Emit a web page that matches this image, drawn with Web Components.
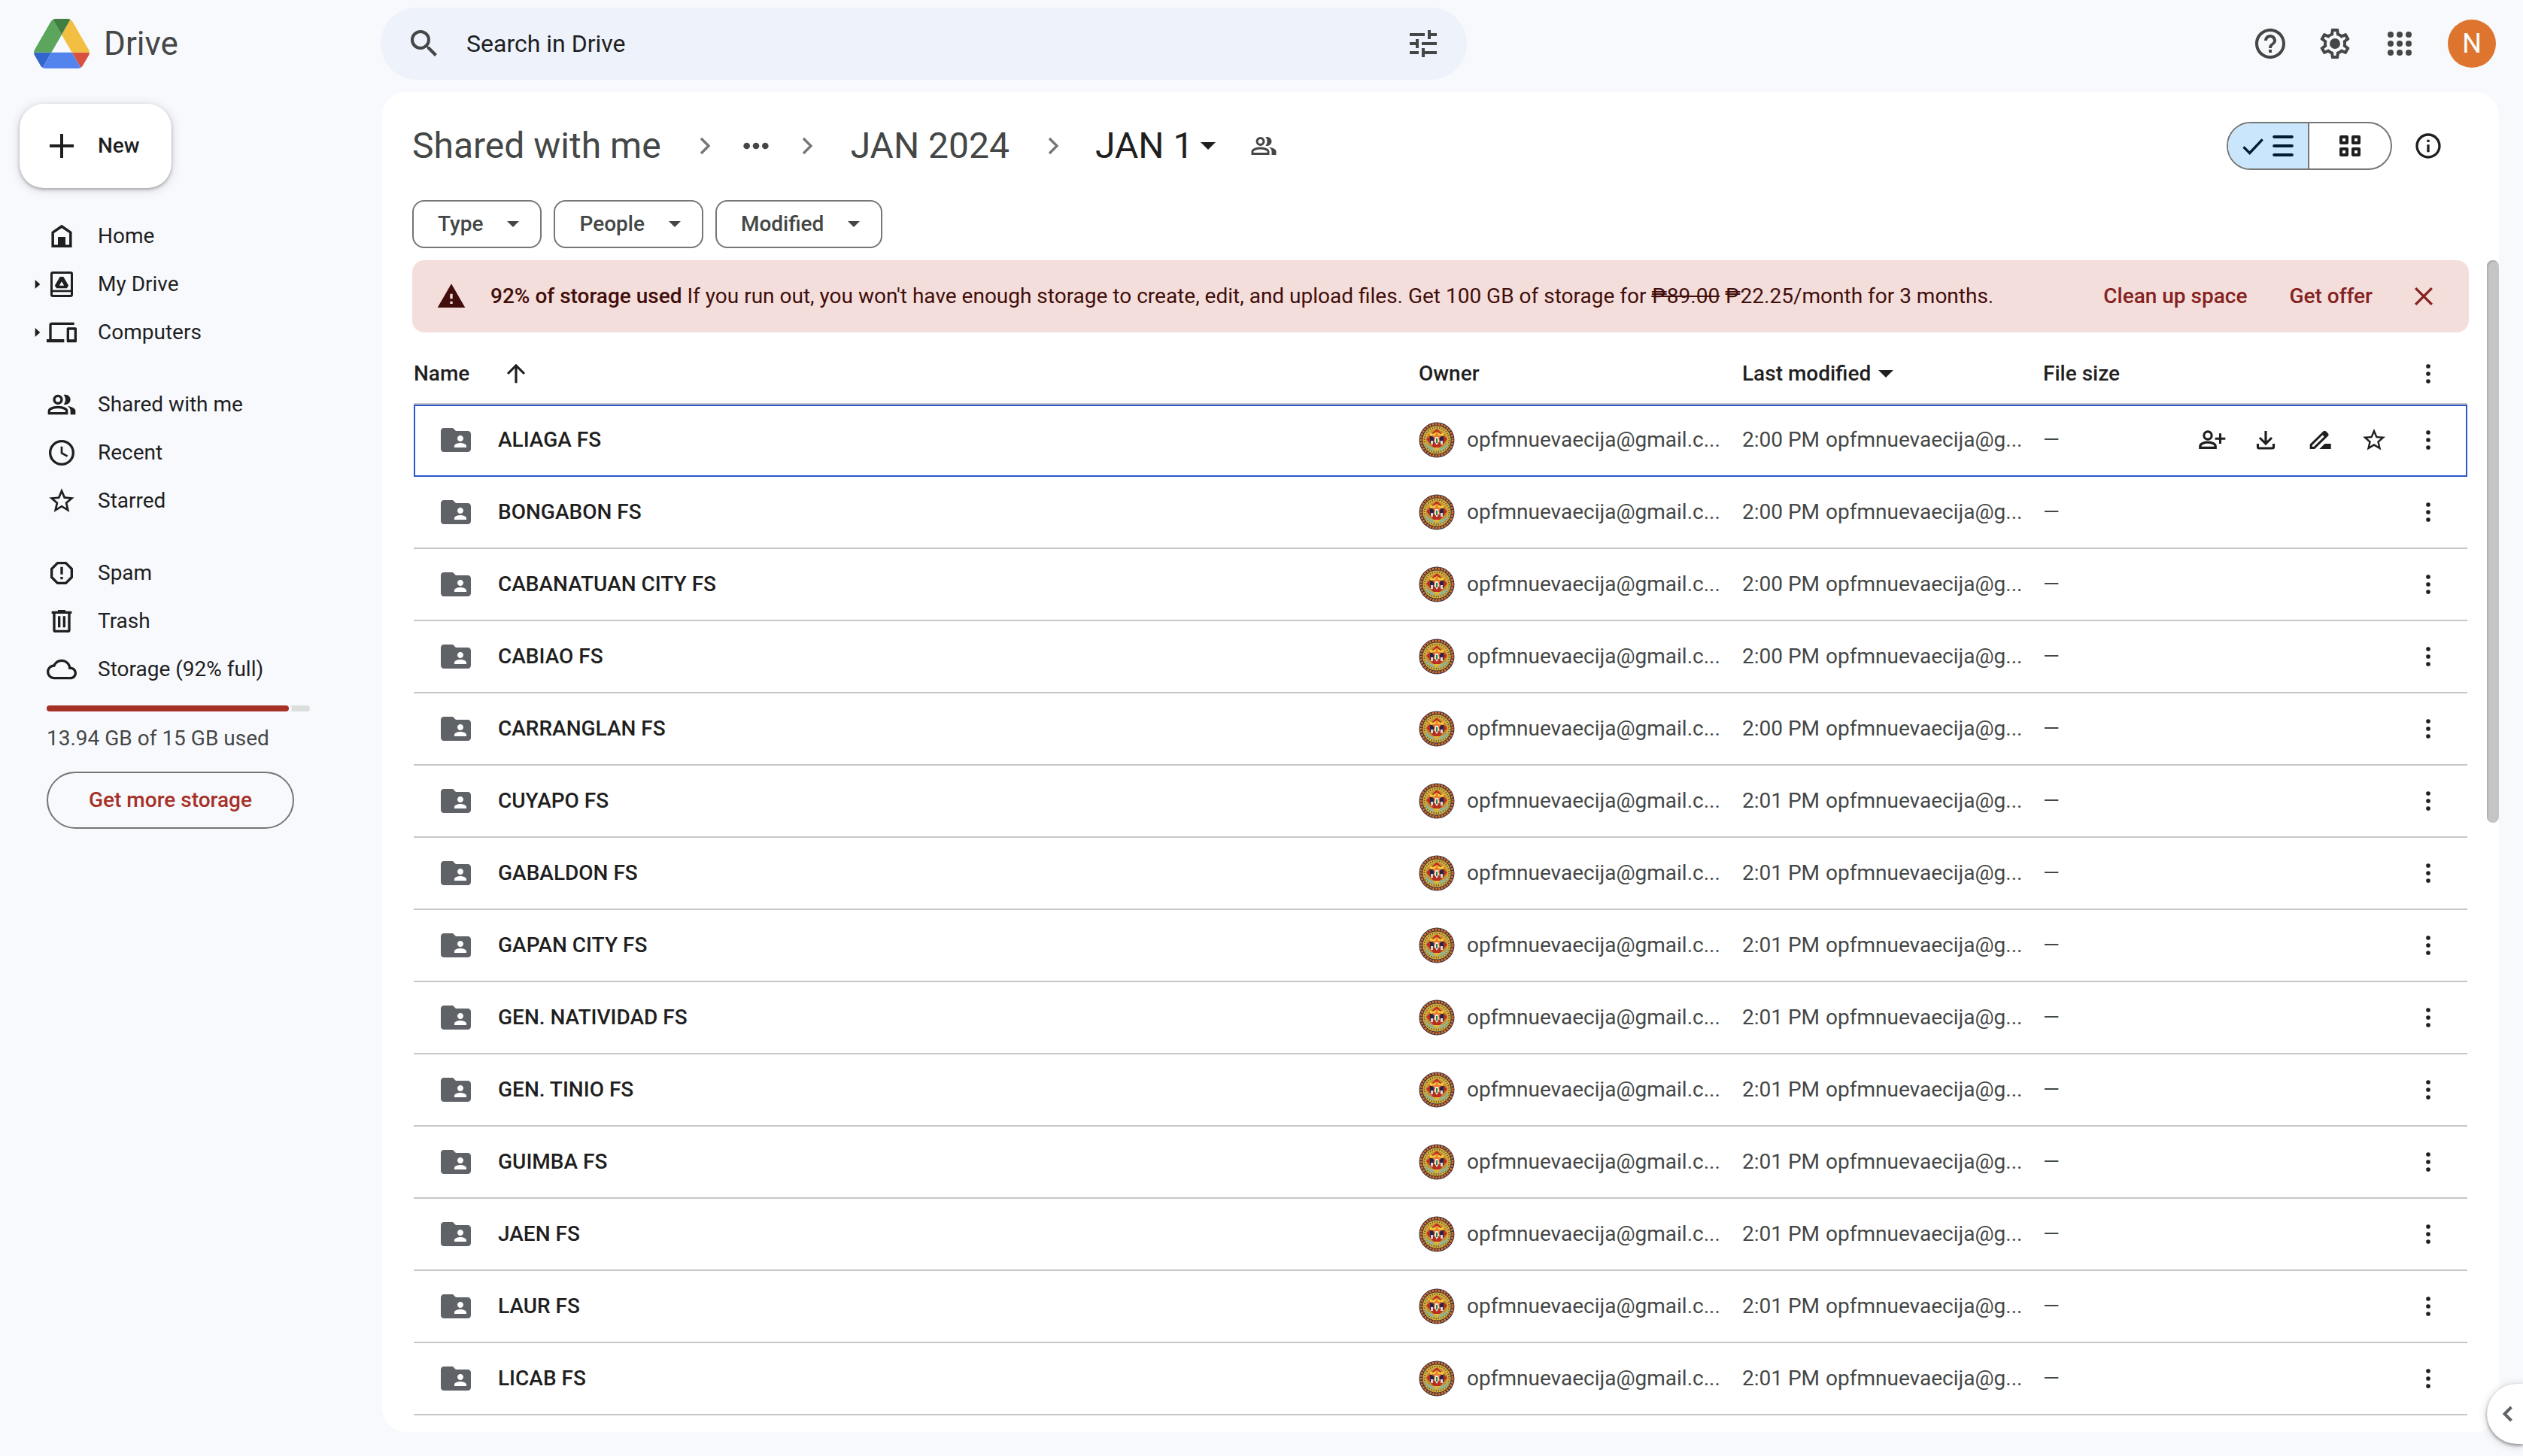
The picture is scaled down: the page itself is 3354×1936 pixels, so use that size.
<!DOCTYPE html>
<html lang="en">
<head>
<meta charset="utf-8">
<title>JAN 1 - Google Drive</title>
<style>
    body {
        margin: 0;
        background: #f8f9fd;
        color: #1f1f1f;
        font-family: Roboto, "Liberation Sans", sans-serif;
        font-size: 28px;
        line-height: 40px;
    }
</style>
</head>
<body>
<drive-app></drive-app>

<script>
// ---------- icons ----------

const icons = {
    search: '<path d="M15.5 14h-.79l-.28-.27A6.47 6.47 0 0 0 16 9.5 6.5 6.5 0 1 0 9.5 16c1.61 0 3.09-.59 4.23-1.57l.27.28v.79l5 4.99L20.49 19l-4.99-5zm-6 0a4.5 4.5 0 1 1 0-9 4.5 4.5 0 0 1 0 9z"/>',
    tune: '<path d="M3 17v2h6v-2H3zM3 5v2h10V5H3zm10 16v-2h8v-2h-8v-2h-2v6h2zM7 9v2H3v2h4v2h2V9H7zm14 4v-2H11v2h10zm-6-4h2V7h4V5h-4V3h-2v6z"/>',
    help: '<path d="M11 18h2v-2h-2v2zm1-16C6.48 2 2 6.48 2 12s4.48 10 10 10 10-4.48 10-10S17.52 2 12 2zm0 18c-4.41 0-8-3.59-8-8s3.59-8 8-8 8 3.59 8 8-3.59 8-8 8zm0-14c-2.21 0-4 1.79-4 4h2c0-1.1.9-2 2-2s2 .9 2 2c0 2-3 1.75-3 5h2c0-2.25 3-2.5 3-5 0-2.21-1.79-4-4-4z"/>',
    settings: '<path fill-rule="evenodd" d="M19.43 12.98c.04-.32.07-.64.07-.98s-.03-.66-.07-.98l2.11-1.65c.19-.15.24-.42.12-.64l-2-3.46c-.12-.22-.39-.3-.61-.22l-2.49 1c-.52-.4-1.08-.73-1.69-.98l-.38-2.65C14.46 2.18 14.25 2 14 2h-4c-.25 0-.46.18-.49.42l-.38 2.65c-.61.25-1.17.59-1.69.98l-2.49-1c-.23-.09-.49 0-.61.22l-2 3.46c-.13.22-.07.49.12.64l2.11 1.65c-.04.32-.07.65-.07.98s.03.66.07.98l-2.11 1.65c-.19.15-.24.42-.12.64l2 3.46c.12.22.39.3.61.22l2.49-1c.52.4 1.08.73 1.69.98l.38 2.65c.03.24.24.42.49.42h4c.25 0 .46-.18.49-.42l.38-2.65c.61-.25 1.17-.59 1.69-.98l2.49 1c.23.09.49 0 .61-.22l2-3.46c.12-.22.07-.49-.12-.64l-2.11-1.65zm-1.98-1.71c.04.31.05.52.05.73 0 .21-.02.43-.05.73l-.14 1.13.89.7 1.08.84-.7 1.21-1.27-.51-1.04-.42-.9.68c-.43.32-.84.56-1.25.73l-1.06.43-.16 1.13-.2 1.35h-1.4l-.19-1.35-.16-1.13-1.06-.43c-.43-.18-.83-.41-1.23-.71l-.91-.7-1.06.43-1.27.51-.7-1.21 1.08-.84.89-.7-.14-1.13c-.03-.31-.05-.54-.05-.74s.02-.43.05-.73l.14-1.13-.89-.7-1.08-.84.7-1.21 1.27.51 1.04.42.9-.68c.43-.32.84-.56 1.25-.73l1.06-.43.16-1.13.2-1.35h1.39l.19 1.35.16 1.13 1.06.43c.43.18.83.41 1.23.71l.91.7 1.06-.43 1.27-.51.7 1.21-1.07.85-.89.7.14 1.13z"/><circle cx="12" cy="12" r="3.5"/>',
    apps: '<circle cx="6" cy="6" r="2"/><circle cx="12" cy="6" r="2"/><circle cx="18" cy="6" r="2"/><circle cx="6" cy="12" r="2"/><circle cx="12" cy="12" r="2"/><circle cx="18" cy="12" r="2"/><circle cx="6" cy="18" r="2"/><circle cx="12" cy="18" r="2"/><circle cx="18" cy="18" r="2"/>',
    plus: '<path d="M11 4h2v7h7v2h-7v7h-2v-7H4v-2h7z"/>',
    home: '<path d="M4.9 19.9V9.1L12 4.2l7.1 4.9v10.8z" fill="none" stroke="currentColor" stroke-width="2.1"/><path d="M9 12.6h6V20H9z"/>',
    drive: '<rect x="3.9" y="2.7" width="16.2" height="18.6" rx="1" fill="none" stroke="currentColor" stroke-width="1.8"/><path d="M4 16.6h16v1.6H4z"/><path fill-rule="evenodd" d="M10.6 6h2.8l4.1 7-1.4 2.2H7.9L6.5 13zM12 9.7l-1.9 3.3h3.8z"/>',
    devices: '<path d="M4 6h18V4H4c-1.1 0-2 .9-2 2v11.4H0V20h14v-2.6H4V6zm19 2h-6c-.55 0-1 .45-1 1v10c0 .55.45 1 1 1h6c.55 0 1-.45 1-1V9c0-.55-.45-1-1-1zm-1 9.6h-4V10h4v7.6z"/>',
    group: '<path d="M1 20v-2.8q0-.85.437-1.562.438-.713 1.163-1.088 1.55-.775 3.15-1.163Q7.35 13 9 13t3.25.387q1.6.388 3.15 1.163.725.375 1.163 1.088Q17 16.35 17 17.2V20Zm18 0v-3q0-1.1-.612-2.113-.613-1.012-1.738-1.737 1.275.15 2.4.512 1.125.363 2.1.888.9.5 1.375 1.112Q23 16.275 23 17v3ZM9 12q-1.65 0-2.825-1.175Q5 9.65 5 8q0-1.65 1.175-2.825Q7.35 4 9 4q1.65 0 2.825 1.175Q13 6.35 13 8q0 1.65-1.175 2.825Q10.65 12 9 12Zm10-4q0 1.65-1.175 2.825Q16.65 12 15 12q-.275 0-.7-.062-.425-.063-.7-.138.675-.8 1.037-1.775Q15 9.05 15 8q0-1.05-.363-2.025Q14.275 5 13.6 4.2q.35-.125.7-.163Q14.65 4 15 4q1.65 0 2.825 1.175Q19 6.35 19 8ZM3 18h12v-.8q0-.275-.137-.5-.138-.225-.363-.35-1.35-.675-2.725-1.013Q10.4 15 9 15t-2.775.337Q4.85 15.675 3.5 16.35q-.225.125-.362.35-.138.225-.138.5Zm6-8q.825 0 1.413-.588Q11 8.825 11 8t-.587-1.412Q9.825 6 9 6q-.825 0-1.412.588Q7 7.175 7 8t.588 1.412Q8.175 10 9 10Z"/>',
    clock: '<circle cx="12" cy="12" r="9.2" fill="none" stroke="currentColor" stroke-width="2"/><path d="M12 7v5.3l4.6 2.5" fill="none" stroke="currentColor" stroke-width="1.6"/>',
    star: '<path d="M22 9.24l-7.19-.62L12 2 9.19 8.63 2 9.24l5.46 4.73L5.82 21 12 17.27 18.18 21l-1.63-7.03L22 9.24zM12 15.4l-3.76 2.27 1-4.28-3.32-2.88 4.38-.38L12 6.1l1.71 4.04 4.38.38-3.32 2.88 1 4.28L12 15.4z"/>',
    spam: '<path d="M8.7 4h6.6L20 8.7v6.6L15.3 20H8.7L4 15.3V8.7z" fill="none" stroke="currentColor" stroke-width="2"/><path d="M11 7h2v6h-2zM11 15h2v2h-2z"/>',
    trash: '<path d="M9 3h6v1h5v2h-1v13a2 2 0 0 1-2 2H7a2 2 0 0 1-2-2V6H4V4h5V3zM7 6v13h10V6H7zm2 2h2v9H9V8zm4 0h2v9h-2V8z"/>',
    cloud: '<path d="M19.35 10.04C18.67 6.59 15.64 4 12 4 9.11 4 6.6 5.64 5.35 8.04 2.34 8.36 0 10.91 0 14c0 3.31 2.69 6 6 6h13c2.76 0 5-2.24 5-5 0-2.64-2.05-4.78-4.65-4.96zM19 18H6c-2.21 0-4-1.79-4-4s1.79-4 4-4h.71C7.37 7.69 9.48 6 12 6c3.04 0 5.5 2.46 5.5 5.5v.5H19c1.66 0 3 1.34 3 3s-1.34 3-3 3z"/>',
    caret: '<path d="M10 8.4l4 3.6-4 3.6z"/>',
    down: '<path d="M6 9h12l-6 6z"/>',
    chevron: '<path d="M9 6l6 6-6 6" fill="none" stroke="currentColor" stroke-width="2"/>',
    back: '<path d="M15 6l-6 6 6 6" fill="none" stroke="currentColor" stroke-width="2.6"/>',
    dots: '<circle cx="4.6" cy="12" r="2.6"/><circle cx="12" cy="12" r="2.6"/><circle cx="19.4" cy="12" r="2.6"/>',
    more: '<circle cx="12" cy="6" r="1.7"/><circle cx="12" cy="12" r="1.7"/><circle cx="12" cy="18" r="1.7"/>',
    check: '<path d="M4.5 12.8l4.9 4.9L19.6 6.8" fill="none" stroke="currentColor" stroke-width="2"/>',
    list: '<path d="M4.9 4.8h14.2M4.9 12h14.2M4.9 19.2h14.2" fill="none" stroke="currentColor" stroke-width="2.4" stroke-linecap="round"/>',
    grid: '<path d="M4.8 4.8h4.8v4.8H4.8zM14.4 4.8h4.8v4.8h-4.8zM4.8 14.4h4.8v4.8H4.8zM14.4 14.4h4.8v4.8h-4.8z" fill="none" stroke="currentColor" stroke-width="2.4" stroke-linejoin="round"/>',
    info: '<path d="M11 7h2v2h-2zm0 4h2v6h-2zm1-9C6.48 2 2 6.48 2 12s4.48 10 10 10 10-4.48 10-10S17.52 2 12 2zm0 18c-4.41 0-8-3.59-8-8s3.59-8 8-8 8 3.59 8 8-3.59 8-8 8z"/>',
    warning: '<path d="M1 21h22L12 2 1 21zm12-3h-2v-2h2v2zm0-4h-2v-4h2v4z"/>',
    close: '<path d="M5.5 5.5l13 13M18.5 5.5l-13 13" fill="none" stroke="currentColor" stroke-width="2"/>',
    up: '<path d="M12 19.4V5.8M5.4 12L12 5.4l6.6 6.6" fill="none" stroke="currentColor" stroke-width="1.9"/>',
    folder: '<path d="M20 6h-8l-2-2H4c-1.1 0-2 .9-2 2v12c0 1.1.9 2 2 2h16c1.1 0 2-.9 2-2V8c0-1.100-.9-2-2-2zm-5 3c1.1 0 2 .9 2 2s-.9 2-2 2-2-.9-2-2 .9-2 2-2zm4 8h-8v-1c0-1.330 2.670-2 4-2s4 .67 4 2v1z"/>',
    share: '<circle cx="9" cy="8.4" r="3.1" fill="none" stroke="currentColor" stroke-width="1.9"/><path d="M2.9 18.2v-1.3c0-1.9 3.3-3 6.1-3s6.100 1.100 6.100 3v1.300z" fill="none" stroke="currentColor" stroke-width="2"/><path d="M18 6.800h1.800V10H23v1.800h-3.200V15H18v-3.200h-3.200V10H18z"/>',
    download: '<path d="M12 4.8v9.600M7.200 10.200L12 15l4.800-4.800M5.700 15v2.600c0 .6.4 1 1 1h10.600c.6 0 1-.4 1-1V15" fill="none" stroke="currentColor" stroke-width="1.9"/>',
    rename: '<path fill-rule="evenodd" d="M4 19.200v-3.800L14.700 5.100c.6-.6 1.500-.6 2.100 0l1.700 1.700c.6.6.6 1.500 0 2.100L7.900 19.200zM5.900 16.200v1.200h1.200l8.300-8.100-1.300-1.200z"/><path d="M11.600 19.200l4.300-4.200h4.900v4.200z"/>'
};

class DriveIcon extends HTMLElement {
    constructor() {
        super();
        this.attachShadow({mode: 'open'});
    }

    connectedCallback() {
        this.shadowRoot.innerHTML = `
            <style>
                :host {
                    display: inline-flex;
                    flex: none;
                    width: 40px;
                    height: 40px;
                }
                svg {
                    width: 100%;
                    height: 100%;
                    fill: currentColor;
                }
            </style>
            <svg viewBox="0 0 24 24" aria-hidden="true">${icons[this.getAttribute('name')] || ''}</svg>
        `;
    }
}
customElements.define('drive-icon', DriveIcon);


class IconButton extends HTMLElement {
    constructor() {
        super();
        this.attachShadow({mode: 'open'});
    }

    connectedCallback() {
        this.shadowRoot.innerHTML = `
            <style>
                :host { display: inline-flex; flex: none; }
                button {
                    display: flex;
                    align-items: center;
                    justify-content: center;
                    width: var(--button-size, 80px);
                    height: var(--button-size, 80px);
                    padding: 0;
                    border: 0;
                    border-radius: 50%;
                    background: none;
                    color: inherit;
                    cursor: pointer;
                }
                button:hover { background: #0000000f; }
                drive-icon {
                    width: var(--icon-size, 40px);
                    height: var(--icon-size, 40px);
                }
            </style>
            <button type="button" aria-label="${this.getAttribute('label')}">
                <drive-icon name="${this.getAttribute('icon')}"></drive-icon>
            </button>
        `;
    }
}
customElements.define('icon-button', IconButton);

// ---------- top bar ----------

const topBar = document.createElement('template');
topBar.innerHTML = `
    <style>
        :host {
            display: flex;
            align-items: center;
            padding: 10px 36px 16px 44px;
            color: #444746;
        }
        .brand {
            display: flex;
            align-items: center;
            gap: 18px;
            flex: none;
            width: 462px;
            color: inherit;
            font-size: 44px;
            text-decoration: none;
        }
        .brand svg {
            width: 76px;
            height: 66px;
        }
        form {
            display: flex;
            align-items: center;
            flex: 0 1 1444px;
            height: 96px;
            box-sizing: border-box;
            padding: 0 18px;
            border-radius: 48px;
            background: #edf2fb;
            --icon-size: 48px;
        }
        input {
            flex: 1;
            min-width: 0;
            margin: 0 16px;
            padding: 0;
            border: 0;
            outline: 0;
            background: none;
            color: #1f1f1f;
            font: inherit;
            font-size: 32px;
        }
        input::placeholder { color: #1f1f1f; opacity: 1; }
        .tools {
            display: flex;
            align-items: center;
            gap: 6px;
            margin-left: auto;
            --icon-size: 48px;
        }
        .account {
            width: 64px;
            height: 64px;
            margin-left: 18px;
            padding: 0;
            border: 0;
            border-radius: 50%;
            background: #de752e;
            color: #fff;
            font: inherit;
            font-size: 36px;
        }
    </style>

    <a class="brand" href="#">
        <svg viewBox="0 0 87.3 78" aria-hidden="true">
            <path d="m6.6 66.85 3.85 6.65c.8 1.4 1.95 2.5 3.3 3.3l13.75-23.8h-27.5c0 1.55.4 3.1 1.2 4.5z" fill="#3266cb"/>
            <path d="m43.65 25-13.75-23.8c-1.35.8-2.5 1.9-3.3 3.3l-25.4 44a9.06 9.06 0 0 0 -1.2 4.5h27.5z" fill="#5ba55c"/>
            <path d="m73.55 76.8c1.35-.8 2.5-1.9 3.3-3.3l1.6-2.75 7.65-13.25c.8-1.4 1.2-2.95 1.2-4.5h-27.5z" fill="#d8503f"/>
            <path d="m43.65 25 13.75-23.8c-1.35-.8-2.9-1.2-4.5-1.2h-18.5c-1.6 0-3.15.45-4.5 1.2z" fill="#417e41"/>
            <path d="m59.8 53h-32.3l-13.75 23.8c1.35.8 2.9 1.2 4.5 1.2h50.8c1.6 0 3.15-.45 4.5-1.2z" fill="#5383ec"/>
            <path d="m73.4 26.5-12.7-22c-.8-1.4-1.95-2.5-3.3-3.3l-13.75 23.8 16.15 28h27.45c0-1.55-.4-3.1-1.2-4.5z" fill="#f2bf42"/>
        </svg>
        <span>Drive</span>
    </a>
    <form role="search">
        <icon-button icon="search" label="Search"></icon-button>
        <input type="search" placeholder="Search in Drive" aria-label="Search in Drive">
        <icon-button icon="tune" label="Advanced search"></icon-button>
    </form>
    <div class="tools">
        <icon-button icon="help" label="Support"></icon-button>
        <icon-button icon="settings" label="Settings"></icon-button>
        <icon-button icon="apps" label="Google apps"></icon-button>
        <button class="account" type="button">N</button>
    </div>
`;

class TopBar extends HTMLElement {
    constructor() {
        super();
        this.attachShadow({mode: 'open'});
        this.shadowRoot.appendChild(topBar.content.cloneNode(true));
    }
}
customElements.define('top-bar', TopBar);

// ---------- side bar ----------

class NavItem extends HTMLElement {
    constructor() {
        super();
        this.attachShadow({mode: 'open'});
    }

    connectedCallback() {
        const caret = this.hasAttribute('expandable') ? '<drive-icon name="caret"></drive-icon>' : '';
        this.shadowRoot.innerHTML = `
            <style>
                :host { display: block; }
                a {
                    display: flex;
                    align-items: center;
                    height: 64px;
                    color: inherit;
                    text-decoration: none;
                }
                .lead {
                    display: flex;
                    justify-content: flex-end;
                    width: 36px;
                }
                .lead drive-icon { margin-right: -8px; }
                .label { margin-left: 28px; }
            </style>
            <a href="#">
                <span class="lead">${caret}</span>
                <drive-icon name="${this.getAttribute('icon')}"></drive-icon>
                <span class="label"><slot></slot></span>
            </a>
        `;
    }
}
customElements.define('nav-item', NavItem);


const sideBar = document.createElement('template');
sideBar.innerHTML = `
    <style>
        :host {
            display: block;
            flex: none;
            width: 482px;
            padding: 16px 0 0 26px;
        }
        .new {
            display: flex;
            align-items: center;
            gap: 24px;
            height: 112px;
            padding: 0 42px 0 32px;
            border: 0;
            border-radius: 32px;
            background: #fff;
            box-shadow: 0 2px 4px #0000004d, 0 2px 12px 4px #00000014;
            color: inherit;
            font: inherit;
            font-weight: 500;
        }
        .new drive-icon { width: 48px; height: 48px; }
        nav {
            display: flex;
            flex-direction: column;
            gap: 32px;
            margin-top: 32px;
        }
        .storage { padding: 16px 96px 0 36px; }
        progress {
            display: block;
            width: 100%;
            height: 8px;
            appearance: none;
            border: 0;
        }
        progress::-webkit-progress-bar { border-radius: 4px; background: #dcdddd; }
        progress::-webkit-progress-value {
            border-radius: 4px;
            background: #a63127;
            box-shadow: 4px 0 0 #f8f9fd;
        }
        .used { margin: 16px 0 24px; color: #444746; }
        .more {
            height: 76px;
            padding: 0 54px;
            border: 2px solid #747775;
            border-radius: 38px;
            background: none;
            color: #a63127;
            font: inherit;
            font-weight: 500;
        }
    </style>

    <button class="new" type="button"><drive-icon name="plus"></drive-icon>New</button>
    <nav>
        <div>
            <nav-item icon="home">Home</nav-item>
            <nav-item icon="drive" expandable>My Drive</nav-item>
            <nav-item icon="devices" expandable>Computers</nav-item>
        </div>
        <div>
            <nav-item icon="group">Shared with me</nav-item>
            <nav-item icon="clock">Recent</nav-item>
            <nav-item icon="star">Starred</nav-item>
        </div>
        <div>
            <nav-item icon="spam">Spam</nav-item>
            <nav-item icon="trash">Trash</nav-item>
            <nav-item icon="cloud">Storage (92% full)</nav-item>
        </div>
    </nav>
    <div class="storage">
        <progress max="100" value="92" aria-label="Storage used"></progress>
        <p class="used">13.94 GB of 15 GB used</p>
        <button class="more" type="button">Get more storage</button>
    </div>
`;

class SideBar extends HTMLElement {
    constructor() {
        super();
        this.attachShadow({mode: 'open'});
        this.shadowRoot.appendChild(sideBar.content.cloneNode(true));
    }
}
customElements.define('side-bar', SideBar);

// ---------- path and view switch ----------

const pathBar = document.createElement('template');
pathBar.innerHTML = `
    <style>
        :host {
            display: flex;
            align-items: center;
            justify-content: space-between;
            height: 144px;
            padding: 0 54px 0 30px;
        }
        nav {
            display: flex;
            align-items: center;
            gap: 28px;
            color: #444746;
            font-size: 48px;
            line-height: 64px;
        }
        a {
            padding: 0 10px;
            color: inherit;
            text-decoration: none;
        }
        nav > drive-icon { color: #747775; }
        nav button {
            display: flex;
            align-items: center;
            padding: 0;
            border: 0;
            background: none;
            color: inherit;
            font: inherit;
        }
        nav .current {
            padding-left: 8px;
            color: #1f1f1f;
        }
        .people { --button-size: 40px; --icon-size: 36px; margin-left: 6px; }
        .side {
            display: flex;
            align-items: center;
            gap: 8px;
        }
        .views {
            display: flex;
            height: 64px;
            box-sizing: border-box;
            border: 2px solid #747775;
            border-radius: 32px;
            overflow: hidden;
        }
        .views button {
            display: flex;
            align-items: center;
            justify-content: center;
            width: 108px;
            padding: 0;
            border: 0;
            background: none;
            color: inherit;
        }
        .views button[aria-pressed="true"] {
            border-right: 2px solid #747775;
            background: #c9e6fc;
            color: #001d35;
        }
    </style>

    <nav aria-label="Path">
        <a href="#">Shared with me</a>
        <drive-icon name="chevron"></drive-icon>
        <button type="button" aria-label="Show path"><drive-icon name="dots"></drive-icon></button>
        <drive-icon name="chevron"></drive-icon>
        <a href="#">JAN 2024</a>
        <drive-icon name="chevron"></drive-icon>
        <button class="current" type="button" aria-haspopup="menu">JAN 1<drive-icon name="down"></drive-icon></button>
        <icon-button class="people" icon="group" label="Manage access"></icon-button>
    </nav>
    <div class="side">
        <div class="views">
            <button type="button" aria-label="List layout" aria-pressed="true">
                <drive-icon name="check"></drive-icon>
                <drive-icon name="list"></drive-icon>
            </button>
            <button type="button" aria-label="Grid layout" aria-pressed="false">
                <drive-icon name="grid"></drive-icon>
            </button>
        </div>
        <icon-button icon="info" label="View details"></icon-button>
    </div>
`;

class PathBar extends HTMLElement {
    constructor() {
        super();
        this.attachShadow({mode: 'open'});
        this.shadowRoot.appendChild(pathBar.content.cloneNode(true));
    }
}
customElements.define('path-bar', PathBar);


const filterChip = document.createElement('template');
filterChip.innerHTML = `
    <style>
        :host { display: inline-flex; }
        button {
            display: flex;
            align-items: center;
            gap: 24px;
            height: 64px;
            padding: 0 20px 0 32px;
            border: 2px solid #747775;
            border-radius: 16px;
            background: none;
            color: #444746;
            font: inherit;
            font-weight: 500;
        }
        drive-icon { width: 32px; height: 32px; }
    </style>
    <button type="button" aria-haspopup="menu"><slot></slot><drive-icon name="down"></drive-icon></button>
`;

class FilterChip extends HTMLElement {
    constructor() {
        super();
        this.attachShadow({mode: 'open'});
        this.shadowRoot.appendChild(filterChip.content.cloneNode(true));
    }
}
customElements.define('filter-chip', FilterChip);

// ---------- storage warning ----------

const storageBanner = document.createElement('template');
storageBanner.innerHTML = `
    <style>
        :host {
            display: flex;
            align-items: center;
            height: 96px;
            padding: 0 20px 0 32px;
            border-radius: 16px;
            background: #f4dedc;
            color: #410e0b;
        }
        p { margin: 0 auto 0 32px; }
        .action {
            margin-right: 56px;
            padding: 0;
            border: 0;
            background: none;
            color: #852221;
            font: inherit;
            font-weight: 500;
        }
        icon-button { margin-left: -28px; color: #852221; }
    </style>

    <drive-icon name="warning"></drive-icon>
    <p><slot></slot></p>
    <button class="action" type="button">Clean up space</button>
    <button class="action" type="button">Get offer</button>
    <icon-button icon="close" label="Dismiss"></icon-button>
`;

class StorageBanner extends HTMLElement {
    constructor() {
        super();
        this.attachShadow({mode: 'open'});
        this.shadowRoot.appendChild(storageBanner.content.cloneNode(true));
    }
}
customElements.define('storage-banner', StorageBanner);

// ---------- files ----------

const ownerBadge = document.createElement('template');
ownerBadge.innerHTML = `
    <style>
        :host { display: inline-flex; flex: none; width: 48px; height: 48px; }
    </style>
    <svg viewBox="0 0 48 48" aria-hidden="true">
        <circle cx="24" cy="24" r="23.5" fill="#3b3340"/>
        <circle cx="24" cy="24" r="21" fill="none" stroke="#d9702a" stroke-width="3" stroke-dasharray="2.6 1.4"/>
        <circle cx="24" cy="24" r="18.6" fill="#d9b13e"/>
        <circle cx="24" cy="24" r="16.4" fill="none" stroke="#6b5a26" stroke-width="2" stroke-dasharray="1.4 1.8"/>
        <circle cx="24" cy="24" r="14" fill="#c68f33"/>
        <path d="M24 9l14 14-14 16-14-16z" fill="#b92d20"/>
        <path d="M7 27q4 11 15 12l-2-5q-7-1-13-7zM41 27q-4 11-15 12l2-5q7-1 13-7z" fill="#8fb391"/>
        <path d="M14 14l5 2 5-3 5 3 5-2-2 6H16z" fill="#f0cd3c"/>
        <path d="M15 19h5v10h-5zM28 19h5v10h-5z" fill="#2a2547"/>
        <path d="M16 25h3v5h-3zM29 25h3v5h-3z" fill="#e6d3cf"/>
        <path d="M24 12l2 6h5l-4 4 2 6-5-3-5 3 2-6-4-4h5z" fill="#ec7a33"/>
        <path d="M22 20h4l1 6-3 5-3-5z" fill="#e3ebdc"/>
        <path d="M23 22h2v6h-2z" fill="#2f7d52"/>
        <path d="M18 34h12l-6 5z" fill="#e0b53c"/>
    </svg>
`;

class OwnerBadge extends HTMLElement {
    constructor() {
        super();
        this.attachShadow({mode: 'open'});
        this.shadowRoot.appendChild(ownerBadge.content.cloneNode(true));
    }
}
customElements.define('owner-badge', OwnerBadge);


const files = [
    ['ALIAGA FS', '2:00 PM'],
    ['BONGABON FS', '2:00 PM'],
    ['CABANATUAN CITY FS', '2:00 PM'],
    ['CABIAO FS', '2:00 PM'],
    ['CARRANGLAN FS', '2:00 PM'],
    ['CUYAPO FS', '2:01 PM'],
    ['GABALDON FS', '2:01 PM'],
    ['GAPAN CITY FS', '2:01 PM'],
    ['GEN. NATIVIDAD FS', '2:01 PM'],
    ['GEN. TINIO FS', '2:01 PM'],
    ['GUIMBA FS', '2:01 PM'],
    ['JAEN FS', '2:01 PM'],
    ['LAUR FS', '2:01 PM'],
    ['LICAB FS', '2:01 PM']
];

const fileRow = ([name, time], index) => `
    <tr class="${index === 0 ? 'focused' : ''}">
        <td><div class="cell name"><drive-icon name="folder"></drive-icon><span>${name}</span></div></td>
        <td><div class="cell owner"><owner-badge></owner-badge><span>opfmnuevaecija@gmail.c...</span></div></td>
        <td><div class="cell modified"><span>${time}</span><span>opfmnuevaecija@g...</span></div></td>
        <td>—</td>
        <td>
            <div class="cell actions">
                ${index === 0 ? `
                    <icon-button icon="share" label="Share"></icon-button>
                    <icon-button icon="download" label="Download"></icon-button>
                    <icon-button icon="rename" label="Rename"></icon-button>
                    <icon-button class="star" icon="star" label="Add to Starred"></icon-button>
                ` : ''}
                <icon-button icon="more" label="More actions"></icon-button>
            </div>
        </td>
    </tr>
`;

class FileList extends HTMLElement {
    constructor() {
        super();
        this.attachShadow({mode: 'open'});
        this.shadowRoot.innerHTML = `
            <style>
                :host { display: block; padding: 0 2px; }
                table {
                    width: 100%;
                    table-layout: fixed;
                    border-spacing: 0;
                    color: #444746;
                }
                .col-owner { width: 430px; }
                .col-modified { width: 400px; }
                .col-size { width: 148px; }
                .col-actions { width: 416px; }
                th, td {
                    height: 94px;
                    padding: 0;
                    border-bottom: 2px solid #c7c7c7;
                    text-align: left;
                    white-space: nowrap;
                }
                th {
                    height: 78px;
                    padding-top: 16px;
                    color: #1f1f1f;
                    font-weight: 500;
                }
                .cell { display: flex; align-items: center; }
                th:first-child .cell { gap: 42px; }
                th button {
                    display: flex;
                    align-items: center;
                    padding: 0;
                    border: 0;
                    background: none;
                    color: inherit;
                    font: inherit;
                }
                .name {
                    gap: 32px;
                    padding-left: 32px;
                    color: #1f1f1f;
                    font-weight: 500;
                }
                .name drive-icon { width: 48px; height: 48px; color: #5f6368; }
                .owner { gap: 16px; }
                .modified { gap: 8px; }
                .actions {
                    justify-content: flex-end;
                    padding-right: 16px;
                    color: #1f1f1f;
                    --button-size: 72px;
                }
                .star { --icon-size: 36px; }
                .focused {
                    outline: 2px solid #2a56c6;
                    outline-offset: -2px;
                }
                .focused td { border-bottom-color: #2a56c6; }
            </style>
            <table>
                <colgroup>
                    <col><col class="col-owner"><col class="col-modified"><col class="col-size"><col class="col-actions">
                </colgroup>
                <thead>
                    <tr>
                        <th><div class="cell"><span>Name</span><button type="button" aria-label="Reverse sort direction"><drive-icon name="up"></drive-icon></button></div></th>
                        <th>Owner</th>
                        <th><button type="button">Last modified<drive-icon name="down"></drive-icon></button></th>
                        <th>File size</th>
                        <th><div class="cell actions"><icon-button icon="more" label="More sorting options"></icon-button></div></th>
                    </tr>
                </thead>
                <tbody>${files.map(fileRow).join('')}</tbody>
            </table>
        `;
    }
}
customElements.define('file-list', FileList);

// ---------- page ----------

const driveApp = document.createElement('template');
driveApp.innerHTML = `
    <style>
        :host {
            display: flex;
            flex-direction: column;
            height: 100vh;
            overflow: hidden;
        }
        .body {
            display: flex;
            flex: 1;
            min-height: 0;
        }
        main {
            display: flex;
            flex-direction: column;
            flex: 1;
            min-width: 0;
            margin: 0 32px 32px 0;
            border-radius: 32px;
            background: #fff;
            overflow: hidden;
        }
        .chips {
            display: flex;
            gap: 16px;
            padding: 0 40px 16px;
        }
        .scroller {
            display: flex;
            gap: 24px;
            flex: 1;
            min-height: 0;
            padding-left: 40px;
        }
        .content { flex: 1; min-width: 0; }
        strong { font-weight: 500; }
        .track { width: 16px; }
        .thumb {
            height: 48%;
            border-radius: 8px;
            background: #c5c5c5;
            box-shadow: inset 2px 2px 0 #b2b2b2;
        }
        /* side panel toggle floats over the corner of the page */
        .panel-toggle {
            position: fixed;
            right: 0;
            bottom: 16px;
            display: flex;
            align-items: center;
            justify-content: center;
            width: 48px;
            height: 80px;
            padding: 0 0 0 8px;
            border: 0;
            border-radius: 40px 0 0 40px;
            background: #fff;
            box-shadow: 0 2px 4px #00000066, 0 2px 12px 2px #0000001f;
            color: #5f6368;
        }
        .panel-toggle drive-icon { width: 36px; height: 36px; }
    </style>

    <top-bar></top-bar>
    <div class="body">
        <side-bar></side-bar>
        <main>
            <path-bar></path-bar>
            <div class="chips">
                <filter-chip>Type</filter-chip>
                <filter-chip>People</filter-chip>
                <filter-chip>Modified</filter-chip>
            </div>
            <div class="scroller">
                <div class="content">
                    <storage-banner>
                        <strong>92% of storage used</strong>
                        If you run out, you won't have enough storage to create, edit, and upload files.
                        Get 100 GB of storage for <s>₱89.00</s> ₱22.25/month for 3 months.
                    </storage-banner>
                    <file-list></file-list>
                </div>
                <div class="track"><div class="thumb"></div></div>
            </div>
        </main>
    </div>
    <button class="panel-toggle" type="button" aria-label="Show side panel"><drive-icon name="back"></drive-icon></button>
`;

class DriveApp extends HTMLElement {
    constructor() {
        super();
        this.attachShadow({mode: 'open'});
        this.shadowRoot.appendChild(driveApp.content.cloneNode(true));
    }
}
customElements.define('drive-app', DriveApp);
</script>
</body>
</html>
